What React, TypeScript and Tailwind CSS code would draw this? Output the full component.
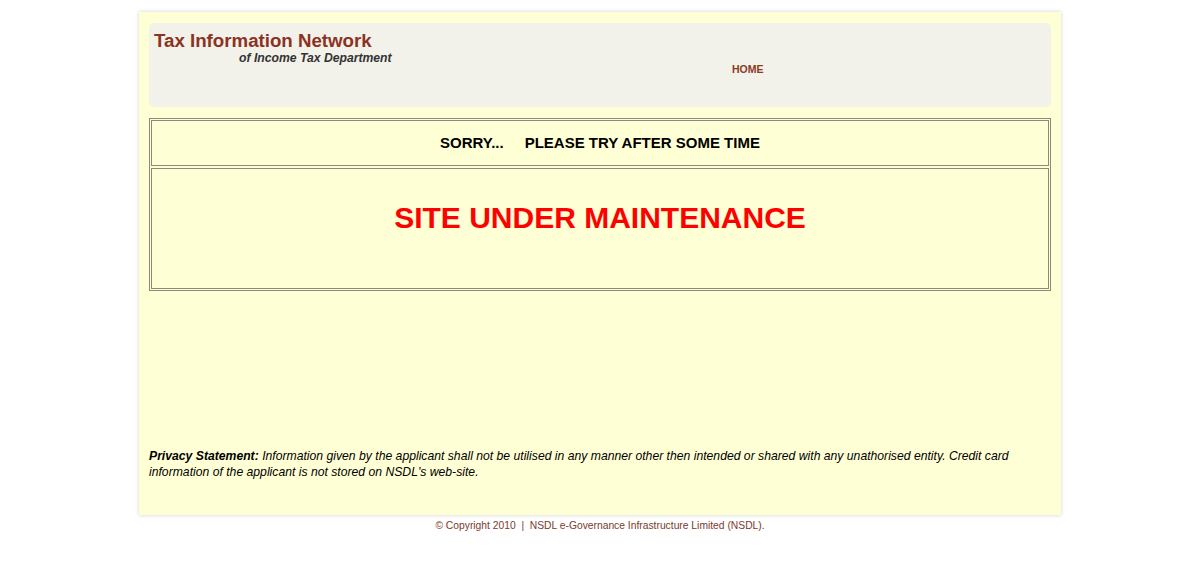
export default function App() {
  return (
    <div className="min-h-[586px] bg-white pt-[12px] font-['Liberation_Sans',Arial,sans-serif]">
      <div className="mx-auto w-[922px] bg-[#ffffd5] px-[10px] pt-[11px] pb-[35px] shadow-[0_0_4px_rgba(0,0,0,0.18)]">
        <div className="h-[84px] rounded-[5px] bg-[#f2f1ea] pl-[5px] pt-[7px] relative">
          <div className="text-[18.7px] font-bold leading-[21px] text-[#8b3322]">Tax Information Network</div>
          <div className="pl-[85px] text-[12.2px] font-bold italic leading-[15px] text-[#333333]">of Income Tax Department</div>
          <div className="absolute left-[583px] top-[40px] text-[10.5px] font-bold leading-[13px] text-[#8b3a1e]">HOME</div>
        </div>
        <div className="mt-[11px] flex flex-col gap-[2px] border border-[#8a8a7a] p-[1px]">
          <div className="flex h-[46px] items-center justify-center border border-[#8a8a7a] text-[15px] font-bold text-black">
            <span>SORRY...</span>
            <span className="ml-[21px]">PLEASE TRY AFTER SOME TIME</span>
          </div>
          <div className="flex h-[121px] justify-center border border-[#8a8a7a] pt-[32px]">
            <span className="text-[30px] font-bold leading-[34px] text-[#ff0000]">SITE UNDER MAINTENANCE</span>
          </div>
        </div>
        <div className="mt-[157px] w-[880px] text-[12.2px] italic leading-[16px] text-black">
          <span className="font-bold">Privacy Statement:</span>{" "}Information given by the applicant shall not be utilised in any manner other then intended or shared with any unathorised entity. Credit card information of the applicant is not stored on NSDL's web-site.
        </div>
      </div>
      <div className="mt-[4px] text-center text-[10.3px] leading-[13px] text-[#7a3b2e]">
        © Copyright 2010&nbsp;&nbsp;|&nbsp;&nbsp;NSDL e-Governance Infrastructure Limited (NSDL).
      </div>
    </div>
  );
}
